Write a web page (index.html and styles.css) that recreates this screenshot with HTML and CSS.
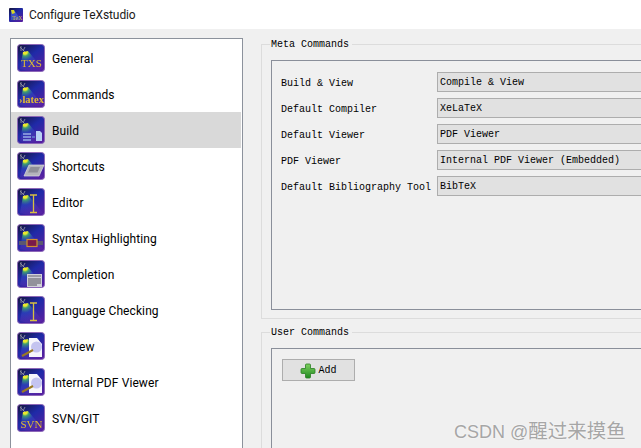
FILE: index.html
```html
<!DOCTYPE html>
<html lang="en">
<head>
<meta charset="utf-8">
<title>Configure TeXstudio</title>
<link rel="stylesheet" href="styles.css">
</head>
<body>
<svg class="defs" width="0" height="0" aria-hidden="true">
  <defs>
    <linearGradient id="bg" x1="0" y1="0" x2="0.75" y2="1">
      <stop offset="0" stop-color="#14143a"/>
      <stop offset="0.5" stop-color="#1f2aa8"/>
      <stop offset="1" stop-color="#5320a0"/>
    </linearGradient>
    <radialGradient id="cone" gradientUnits="userSpaceOnUse" cx="8" cy="8" r="20">
      <stop offset="0" stop-color="#f2f020"/>
      <stop offset="0.11" stop-color="#e8e830"/>
      <stop offset="0.2" stop-color="#3fa070"/>
      <stop offset="0.45" stop-color="#3048c0" stop-opacity="0.6"/>
      <stop offset="1" stop-color="#7a3ac0" stop-opacity="0.15"/>
    </radialGradient>
    <symbol id="base" viewBox="0 0 28 28">
      <rect x="0.5" y="0.5" width="27" height="27" rx="3" fill="url(#bg)" stroke="#8d68b8"/>
      <path d="M6 8 L11 7 L26 25 Q14 28 3 25 Z" fill="url(#cone)"/>
      <path d="M3 3 L8 8 M4 2 L4 7 M8 3 L6 7" stroke="#9a9aa8" stroke-width="0.8" fill="none"/>
    </symbol>
    <symbol id="doc" viewBox="0 0 28 28">
      <path d="M12 6 H20 L25 12 V25 H12 Z" fill="#f6f6fc"/>
      <circle cx="19.5" cy="15" r="5.5" fill="#c4c4f0"/>
      <path d="M5 24 L16 18" stroke="#9a7a20" stroke-width="2"/>
    </symbol>
    <symbol id="cursor" viewBox="0 0 28 28">
      <path d="M13 7 H20 M13 24.5 H20 M16.5 7 V24.5" stroke="#d8c040" stroke-width="1.3" fill="none"/>
    </symbol>
  </defs>
</svg>
<div class="window">
  <header class="titlebar">
    <svg class="app-icon" viewBox="0 0 14 14"><rect width="14" height="14" rx="1" fill="url(#bg)"/><path d="M2 2 L5 2 L12 12 L2 12 Z" fill="#3a50c8"/><path d="M2 2 L5 2 L6 5 L3 6 Z" fill="#d8d820"/><text x="3" y="12" class="app-tex">TeX</text></svg>
    <span class="title">Configure TeXstudio</span>
  </header>
  <div class="content">
    <ul class="nav">
      <li class="nav-item"><svg class="icon" viewBox="0 0 28 28"><use href="#base"/><text x="14.5" y="23" class="ic-text ic-big">TXS</text></svg><span>General</span></li>
      <li class="nav-item"><svg class="icon" viewBox="0 0 28 28"><use href="#base"/><text x="14.5" y="23" class="ic-text ic-mid">&#8250;latex</text></svg><span>Commands</span></li>
      <li class="nav-item active"><svg class="icon" viewBox="0 0 28 28"><use href="#base"/><path d="M6 18 H14 M6 21 H14 M6 24 H14" stroke="#7f8fd8" stroke-width="2"/><path d="M15 21 H18" stroke="#5a6ac8" stroke-width="2"/><path d="M19 15 H23 L25 17 V25 H19 Z" fill="#b8d0f4"/></svg><span>Build</span></li>
      <li class="nav-item"><svg class="icon" viewBox="0 0 28 28"><use href="#base"/><path d="M12 13 H27 L22 24 H7 Z" fill="#b4b4bc" stroke="#dcdce0" stroke-width="0.7"/><path d="M13.5 15 H23 L20.5 20.5 H11 Z" fill="#8e8e98"/></svg><span>Shortcuts</span></li>
      <li class="nav-item"><svg class="icon" viewBox="0 0 28 28"><use href="#base"/><use href="#cursor"/></svg><span>Editor</span></li>
      <li class="nav-item"><svg class="icon" viewBox="0 0 28 28"><use href="#base"/><rect x="2" y="17" width="24" height="4" fill="#5b5770"/><rect x="10" y="15.5" width="10" height="7" fill="#7a1a4a" stroke="#d09030" stroke-width="1.2"/></svg><span>Syntax Highlighting</span></li>
      <li class="nav-item"><svg class="icon" viewBox="0 0 28 28"><use href="#base"/><rect x="10" y="14" width="15" height="13" fill="#d0d0d8"/><path d="M11 16 H24" stroke="#8a8a94" stroke-width="1.5"/><path d="M11 19 H24 M11 21 H24 M11 23 H24 M11 25 H20" stroke="#55555f" stroke-width="1.2"/></svg><span>Completion</span></li>
      <li class="nav-item"><svg class="icon" viewBox="0 0 28 28"><use href="#base"/><use href="#cursor"/></svg><span>Language Checking</span></li>
      <li class="nav-item"><svg class="icon" viewBox="0 0 28 28"><use href="#base"/><use href="#doc"/></svg><span>Preview</span></li>
      <li class="nav-item"><svg class="icon" viewBox="0 0 28 28"><use href="#base"/><use href="#doc"/></svg><span>Internal PDF Viewer</span></li>
      <li class="nav-item"><svg class="icon" viewBox="0 0 28 28"><use href="#base"/><text x="14.5" y="23.5" class="ic-text ic-big">SVN</text></svg><span>SVN/GIT</span></li>
    </ul>
    <main class="panel">
      <fieldset class="group group-meta">
        <legend>Meta Commands</legend>
        <div class="frame form">
          <label>Build &amp; View</label><div class="combo">Compile &amp; View</div>
          <label>Default Compiler</label><div class="combo">XeLaTeX</div>
          <label>Default Viewer</label><div class="combo">PDF Viewer</div>
          <label>PDF Viewer</label><div class="combo">Internal PDF Viewer (Embedded)</div>
          <label>Default Bibliography Tool</label><div class="combo">BibTeX</div>
        </div>
      </fieldset>
      <fieldset class="group group-user">
        <legend>User Commands</legend>
        <div class="frame user">
          <button class="add" type="button"><svg class="plus" viewBox="0 0 16 16"><defs><linearGradient id="pl" x1="0" y1="0" x2="0" y2="1"><stop offset="0" stop-color="#7fd060"/><stop offset="1" stop-color="#1f8a20"/></linearGradient></defs><path d="M5.5 2 Q5.5 1 6.5 1 H9.5 Q10.5 1 10.5 2 V5.5 H14 Q15 5.5 15 6.5 V9.5 Q15 10.5 14 10.5 H10.5 V14 Q10.5 15 9.5 15 H6.5 Q5.5 15 5.5 14 V10.5 H2 Q1 10.5 1 9.5 V6.5 Q1 5.5 2 5.5 H5.5 Z" fill="url(#pl)" stroke="#2a7f22" stroke-width="0.8"/></svg>Add</button>
        </div>
      </fieldset>
    </main>
  </div>
  <div class="watermark">CSDN @<span class="wm-cjk">醒过来摸鱼</span></div>
</div>
</body>
</html>
```

FILE: styles.css
```css
* { box-sizing: border-box; }
html, body { margin: 0; padding: 0; height: 100%; overflow: hidden; }
body { background: #f0f0f0; font-family: Roboto, "Liberation Sans", sans-serif; color: #000; }
.defs { position: absolute; }
.window { position: relative; width: 641px; height: 448px; overflow: hidden; display: flex; flex-direction: column; }
.titlebar { height: 29px; background: #fff; display: flex; align-items: center; padding-left: 9px; gap: 6px; flex: none; }
.app-icon { width: 14px; height: 14px; }
.app-tex { font: 6px "Liberation Serif", serif; fill: #d8c040; }
.title { font-size: 12px; color: #1a1a1a; letter-spacing: -0.1px; }
.content { display: flex; flex: 1; padding: 9px 0 0 10px; min-height: 0; }
.nav { list-style: none; margin: 0; padding: 1px 1px 0 0; width: 233px; flex: none; background: #fff; border: 1px solid #8c929c; border-bottom: 0; }
.nav-item { height: 36px; display: flex; align-items: center; gap: 7px; padding-left: 6px; font-size: 12px; letter-spacing: 0.1px; }
.nav-item span { padding-top: 2px; }
.nav-item.active { background: #d9d9d9; }
.icon { width: 28px; height: 28px; flex: none; filter: blur(0.3px); }
.ic-text { font-family: "Liberation Serif", serif; fill: #e2bc30; text-anchor: middle; letter-spacing: 0; }
.ic-big { font-size: 11px; }
.ic-mid { font-size: 10.5px; font-weight: bold; }
.panel { width: 500px; flex: none; margin-left: 18px; font: 10px "Liberation Mono", monospace; }
.group { margin: 0; padding: 0 0 0 9px; border: 1px solid #dcdcdc; min-width: 0; }
.group legend { margin-left: -1px; padding: 2px 3px 0 1px; line-height: 12px; }
.group-meta { height: 282px; margin-top: -1px; padding-top: 9px; padding-bottom: 8px; }
.group-user { margin-top: 6px; height: 130px; padding-top: 9px; }
.frame { border: 1px solid #8a8f9a; height: 100%; }
.form { display: grid; grid-template-columns: 156px 1fr; grid-auto-rows: 20px; row-gap: 6px; padding: 11px 0 0 9px; align-items: center; }
.form label { padding-top: 2px; }
.combo { height: 20px; line-height: 20px; background: #e1e1e1; border: 1px solid #adadad; padding-left: 2px; }
.user { padding: 10px 0 0 10px; }
.add { width: 73px; height: 22px; display: flex; align-items: center; justify-content: center; gap: 2px; padding: 1px 0 0; margin: 0; background: #e1e1e1; border: 1px solid #adadad; font: inherit; }
.plus { width: 16px; height: 16px; }
.watermark { position: absolute; left: 454px; top: 415px; font: 18px "Liberation Sans", "Noto Sans CJK SC", sans-serif; color: #a6a6a6; text-shadow: 0 0 2px #fff; white-space: nowrap; }
.wm-cjk { font-size: 19.5px; }
```
